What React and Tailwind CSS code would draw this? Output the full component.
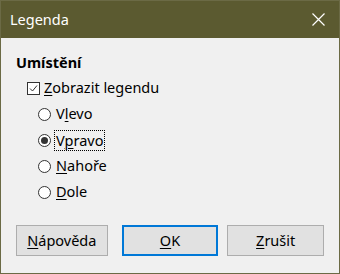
import React from 'react';

const U = ({ children }) => <span className="underline underline-offset-2 decoration-1">{children}</span>;

const Radio = ({ checked, children, focused }) => (
  <div className="flex items-center h-[26px]">
    <svg width="13" height="13" viewBox="0 0 13 13" className="mr-[4px]">
      <circle cx="6.5" cy="6.5" r="6" fill="#fff" stroke="#333" strokeWidth="1" />
      {checked && <circle cx="6.5" cy="6.5" r="3.5" fill="#333" />}
    </svg>
    <span className={focused ? 'outline outline-1 outline-dotted outline-black px-[1px] leading-[19px]' : 'px-[1px]'}>
      {children}
    </span>
  </div>
);

const Button = ({ children, primary, className }) => (
  <button
    className={`h-[31px] bg-[#e1e1e1] text-[14.5px] text-black ${primary ? 'border-2 border-[#0078d7]' : 'border border-[#adadad]'} ${className}`}
  >
    {children}
  </button>
);

export default function App() {
  return (
    <div
      className="w-[340px] h-[274px] flex flex-col border border-[#6b6a45] bg-[#f0f0f0] text-black text-[14.5px]"
      style={{ fontFamily: '"Noto Sans", sans-serif' }}
    >
      <div className="h-[37px] shrink-0 bg-[#5b5a30] flex items-center justify-between pl-[9px] pr-[14px]">
        <span className="text-white text-[14.5px]">Legenda</span>
        <svg width="13" height="13" viewBox="0 0 13 13">
          <path d="M0.5 0.5 L12.5 12.5 M12.5 0.5 L0.5 12.5" stroke="#fff" strokeWidth="1.2" />
        </svg>
      </div>
      <div className="flex-1 flex flex-col px-[15px] pt-[12px]">
        <div className="font-bold h-[25px] leading-[25px]">Umístění</div>
        <div className="pl-[11px] flex flex-col">
          <div className="flex items-center h-[26px]">
            <span className="w-[13px] h-[13px] border border-[#333] bg-white flex items-center justify-center mr-[4px]">
              <svg width="11" height="11" viewBox="0 0 11 11">
                <path d="M2 5.5 L4.5 8 L9 2.5" fill="none" stroke="#333" strokeWidth="1" />
              </svg>
            </span>
            <span><U>Z</U>obrazit legendu</span>
          </div>
          <div className="pl-[11px] flex flex-col">
            <Radio>V<U>l</U>evo</Radio>
            <Radio checked focused>V<U>p</U>ravo</Radio>
            <Radio><U>N</U>ahoře</Radio>
            <Radio><U>D</U>ole</Radio>
          </div>
        </div>
        <div className="flex mt-[20px]">
          <Button className="w-[92px]"><U>N</U>ápověda</Button>
          <Button primary className="w-[97px] ml-[14px]"><U>O</U>K</Button>
          <Button className="w-[97px] ml-[9px]"><U>Z</U>rušit</Button>
        </div>
      </div>
    </div>
  );
}
